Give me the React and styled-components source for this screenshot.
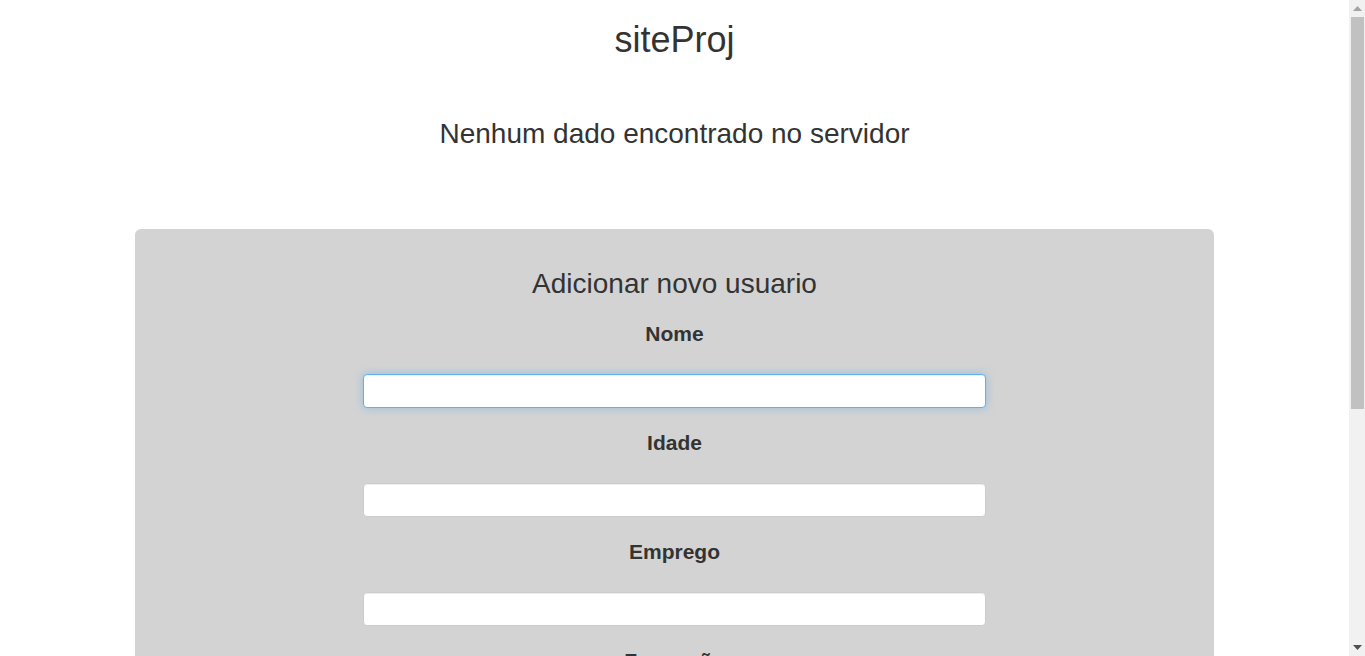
import styled, { createGlobalStyle } from 'styled-components'

const GlobalStyle = createGlobalStyle`
  html, body {
    margin: 0;
    padding: 0;
    background: #fff;
    overflow: hidden;
  }
  body {
    font-family: "Liberation Sans", Arial, Helvetica, sans-serif;
    color: #333;
    font-size: 14px;
  }
  * { box-sizing: border-box; }
`

const Window = styled.div`
  display: flex;
  height: 100vh;
`

const Viewport = styled.div`
  flex: 1;
  min-width: 0;
  overflow: hidden;
`

const ScrollBar = styled.div`
  width: 16px;
  flex: none;
  background: #f1f1f1;
  display: flex;
  flex-direction: column;
`

const Arrow = styled.div`
  height: 17px;
  flex: none;
  display: flex;
  align-items: center;
  justify-content: center;
  padding-left: 1px;
`

const Track = styled.div`
  flex: 1;
  padding: 0 1px 0 2px;
`

const Thumb = styled.div`
  height: 392px;
  background: #c1c1c1;
`

const Page = styled.div`
  display: flex;
  flex-direction: column;
  align-items: center;
`

const Title = styled.h1`
  margin: 20px 0 0;
  font-size: 36px;
  line-height: 40px;
  font-weight: 500;
  text-align: center;
`

const Message = styled.h3`
  margin: 58px 0 0;
  font-size: 28px;
  line-height: 31px;
  font-weight: 500;
  text-align: center;
`

const Card = styled.form`
  width: 80%;
  margin-top: 80px;
  background: #d3d3d3;
  border-radius: 6px;
  padding: 39px 0 40px;
  display: flex;
  flex-direction: column;
  align-items: center;
`

const CardTitle = styled.h3`
  margin: 0 0 23px;
  font-size: 28px;
  line-height: 31px;
  font-weight: 500;
  text-align: center;
`

const Field = styled.div`
  display: flex;
  flex-direction: column;
  align-items: center;
  gap: 28px;
  margin-bottom: 23px;
`

const Label = styled.label`
  font-size: 21px;
  line-height: 24px;
  font-weight: bold;
`

const Input = styled.input`
  width: 623px;
  height: 34px;
  padding: 6px 12px;
  font-size: 14px;
  font-family: inherit;
  color: #555;
  background: #fff;
  border: 1px solid ${p => (p.$focused ? '#66afe9' : '#ccc')};
  border-radius: 4px;
  outline: none;
  box-shadow: ${p =>
    p.$focused
      ? 'inset 0 1px 1px rgba(0,0,0,.075), 0 0 8px rgba(102,175,233,.6)'
      : 'inset 0 1px 1px rgba(0,0,0,.075)'};
`

const Submit = styled.button`
  margin-top: 10px;
  padding: 6px 12px;
  font-size: 14px;
  font-family: inherit;
  color: #fff;
  background: #337ab7;
  border: 1px solid #2e6da4;
  border-radius: 4px;
`

const fields = ['Nome', 'Idade', 'Emprego', 'Formação']

function Triangle({ up, color }) {
  return (
    <svg width="9" height="5" viewBox="0 0 9 5">
      <path d={up ? 'M0 5 L4.5 0 L9 5 Z' : 'M0 0 L4.5 5 L9 0 Z'} fill={color} />
    </svg>
  )
}

export default function App() {
  return (
    <Window>
      <GlobalStyle />
      <Viewport>
        <Page>
          <Title>siteProj</Title>
          <Message>Nenhum dado encontrado no servidor</Message>
          <Card onSubmit={e => e.preventDefault()}>
            <CardTitle>Adicionar novo usuario</CardTitle>
            {fields.map((f, i) => (
              <Field key={f}>
                <Label htmlFor={'f' + i}>{f}</Label>
                <Input id={'f' + i} type="text" $focused={i === 0} />
              </Field>
            ))}
            <Submit type="submit">Adicionar</Submit>
          </Card>
        </Page>
      </Viewport>
      <ScrollBar>
        <Arrow>
          <Triangle up color="#a3a3a3" />
        </Arrow>
        <Track>
          <Thumb />
        </Track>
        <Arrow>
          <Triangle color="#505050" />
        </Arrow>
      </ScrollBar>
    </Window>
  )
}
